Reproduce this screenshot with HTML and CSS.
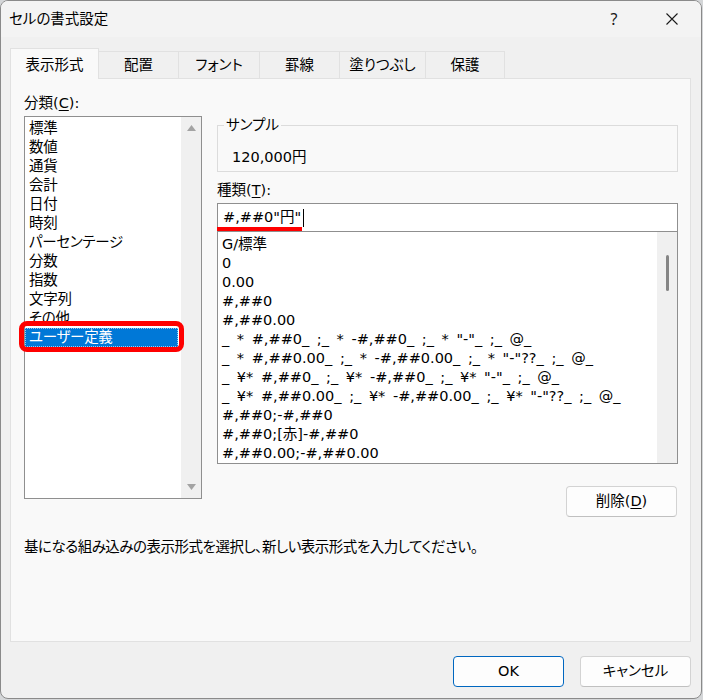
FILE: index.html
```html
<!DOCTYPE html>
<html lang="ja">
<head>
<meta charset="utf-8">
<title>セルの書式設定</title>
<link rel="stylesheet" href="styles.css">
</head>
<body>
<div class="dialog">
  <div class="titlebar">
    <span class="title">セルの書式設定</span>
    <span class="help">?</span>
    <span class="close"><svg width="12" height="12" viewBox="0 0 12 12"><path d="M0.5 0.5L11.5 11.5M11.5 0.5L0.5 11.5" stroke="#1a1a1a" stroke-width="1.1" fill="none"/></svg></span>
  </div>
  <div class="tabs">
    <div class="tab active">表示形式</div>
    <div class="tab">配置</div>
    <div class="tab">フォント</div>
    <div class="tab">罫線</div>
    <div class="tab">塗りつぶし</div>
    <div class="tab last">保護</div>
  </div>
  <div class="panel">
    <div class="columns">
      <div class="col-left">
        <div class="label cat-label">分類(<u>C</u>):</div>
        <div class="listbox cat">
          <div class="items">
            <div class="item">標準</div>
            <div class="item">数値</div>
            <div class="item">通貨</div>
            <div class="item">会計</div>
            <div class="item">日付</div>
            <div class="item">時刻</div>
            <div class="item">パーセンテージ</div>
            <div class="item">分数</div>
            <div class="item">指数</div>
            <div class="item">文字列</div>
            <div class="item">その他</div>
            <div class="item selected">ユーザー定義</div>
          </div>
          <div class="scrollbar arrows">
            <svg width="9" height="6" viewBox="0 0 9 6"><polygon points="4.5,0 9,6 0,6" fill="#a3a3a3"/></svg>
            <svg width="9" height="6" viewBox="0 0 9 6"><polygon points="0,0 9,0 4.5,6" fill="#a3a3a3"/></svg>
          </div>
          <div class="mark-box"></div>
        </div>
      </div>
      <div class="col-right">
        <fieldset class="sample">
          <legend>サンプル</legend>
          <div class="sample-value">120,000円</div>
        </fieldset>
        <div class="label type-label">種類(<u>T</u>):</div>
        <div class="input">#,##0"円"<span class="caret"></span><div class="mark-line"></div></div>
        <div class="listbox fmt">
          <div class="items">
            <div class="item">G/標準</div>
            <div class="item">0</div>
            <div class="item">0.00</div>
            <div class="item">#,##0</div>
            <div class="item">#,##0.00</div>
            <div class="item">_ * #,##0_ ;_ * -#,##0_ ;_ * "-"_ ;_ @_</div>
            <div class="item">_ * #,##0.00_ ;_ * -#,##0.00_ ;_ * "-"??_ ;_ @_</div>
            <div class="item">_ ¥* #,##0_ ;_ ¥* -#,##0_ ;_ ¥* "-"_ ;_ @_</div>
            <div class="item">_ ¥* #,##0.00_ ;_ ¥* -#,##0.00_ ;_ ¥* "-"??_ ;_ @_</div>
            <div class="item">#,##0;-#,##0</div>
            <div class="item">#,##0;[赤]-#,##0</div>
            <div class="item">#,##0.00;-#,##0.00</div>
          </div>
          <div class="scrollbar thumb-track"><div class="thumb"></div></div>
        </div>
        <div class="actions">
          <button class="btn">削除(<u>D</u>)</button>
        </div>
      </div>
    </div>
    <p class="desc">基になる組み込みの表示形式を選択し、新しい表示形式を入力してください。</p>
  </div>
  <div class="footer">
    <button class="btn ok">OK</button>
    <button class="btn">キャンセル</button>
  </div>
</div>
</body>
</html>
```

FILE: styles.css
```css
html, body {
  margin: 0;
  padding: 0;
}

body {
  background: #d4d6d8;
  font-family: "DejaVu Sans", "Noto Sans CJK JP", sans-serif;
  font-size: 14.5px;
  color: #000;
  font-feature-settings: "palt";
}

u {
  text-underline-offset: 2px;
}

.dialog {
  width: 702px;
  height: 699px;
  box-sizing: border-box;
  border: 1px solid #8a8a8a;
  border-radius: 8px;
  background: #f0f0f0;
  overflow: hidden;
  display: flex;
  flex-direction: column;
}

/* Title bar */
.titlebar {
  height: 36px;
  flex: none;
  background: #f3f3f3;
  display: flex;
  align-items: center;
  padding-left: 8px;
  line-height: 36px;
}

.title {
  flex: 1;
}

.help {
  width: 58px;
  text-align: center;
  color: #1a1a1a;
  font-family: "Noto Sans", sans-serif;
  font-size: 16px;
}

.close {
  width: 58px;
  height: 36px;
  display: flex;
  align-items: center;
  justify-content: center;
}

/* Tabs */
.tabs {
  display: grid;
  grid-template-columns: 89px 79px 81px 80px 86px 80px;
  align-items: end;
  height: 30px;
  margin: 11px 0 0 9px;
  flex: none;
}

.tab {
  box-sizing: border-box;
  height: 27px;
  border-top: 1px solid #e1e1e1;
  border-left: 1px solid #e1e1e1;
  background: #f0f0f0;
  text-align: center;
  line-height: 26px;
  white-space: nowrap;
}

.tab.last {
  border-right: 1px solid #e1e1e1;
}

.tab.active {
  height: 31px;
  margin-bottom: -1px;
  padding-top: 3px;
  border-right: 1px solid #e1e1e1;
  background: #f9f9f9;
  position: relative;
  z-index: 1;
}

.tab.active + .tab {
  border-left: none;
}

/* Panel */
.panel {
  margin-left: 9px;
  width: 681px;
  height: 564px;
  flex: none;
  box-sizing: border-box;
  border: 1px solid #e1e1e1;
  background: #f9f9f9;
  padding: 14px 12px 0 13px;
}

.columns {
  display: grid;
  grid-template-columns: 178px 461px;
  column-gap: 15px;
  align-items: start;
}

.label {
  line-height: 20px;
  height: 20px;
  white-space: nowrap;
}

.cat-label {
  margin-bottom: 3px;
}

.listbox {
  box-sizing: border-box;
  border: 1px solid #8f8f8f;
  background: #fff;
  display: flex;
  position: relative;
}

.items {
  flex: 1;
  min-width: 0;
}

.item {
  height: 19px;
  line-height: 19px;
  padding-left: 4px;
  white-space: nowrap;
}

.cat {
  height: 383px;
}

.cat .items {
  padding: 2px 3px 0 0;
  letter-spacing: -0.3px;
}

.item.selected {
  background: #0078d7;
  color: #fff;
  outline: 1px dotted rgba(255, 255, 255, 0.6);
  outline-offset: -1px;
}

.scrollbar {
  width: 20px;
  flex: none;
  background: #f0f0f0;
  box-sizing: border-box;
  display: flex;
  flex-direction: column;
  align-items: center;
}

.arrows {
  justify-content: space-between;
  padding: 8px 0;
}

.mark-box {
  position: absolute;
  left: -6px;
  top: 204px;
  width: 165px;
  height: 31px;
  box-sizing: border-box;
  border: 5px solid #ff0000;
  border-radius: 8px;
}

/* Right column */
.sample {
  margin: 22px 0 0 0;
  padding: 0;
  border: 1px solid #dcdcdc;
  min-width: 0;
}

.sample legend {
  padding: 0 2px;
  margin-left: 6px;
  line-height: 20px;
}

.sample-value {
  margin: 12px 0 4px 14px;
  line-height: 20px;
}

.type-label {
  margin-top: 8px;
}

.input {
  margin-top: 3px;
  height: 29px;
  box-sizing: border-box;
  border: 1px solid #8f8f8f;
  background: #fff;
  line-height: 27px;
  padding-left: 5px;
  position: relative;
  white-space: nowrap;
}

.caret {
  display: inline-block;
  width: 1px;
  height: 18px;
  background: #000;
  vertical-align: middle;
  margin-left: 2px;
}

.mark-line {
  position: absolute;
  left: -1px;
  top: 23px;
  width: 85px;
  height: 4px;
  background: #ff0000;
}

.fmt {
  margin-top: -1px;
  height: 233px;
  overflow: hidden;
}

.fmt .items {
  padding-top: 3px;
  word-spacing: 3px;
}

.thumb-track {
  padding-top: 23px;
}

.thumb {
  width: 3px;
  height: 36px;
  border-radius: 2px;
  background: #858585;
}

.actions {
  display: flex;
  justify-content: flex-end;
  margin-top: 22px;
  padding-right: 1px;
}

.btn {
  font: inherit;
  color: #000;
  width: 111px;
  height: 31px;
  padding: 0;
  box-sizing: border-box;
  border: 1px solid #d3d3d3;
  border-bottom-color: #c0c0c0;
  border-radius: 4px;
  background: #fdfdfd;
  line-height: 29px;
  white-space: nowrap;
}

.btn.ok {
  border-color: #0067c0;
}

.desc {
  margin: 20px 0 0 0;
  line-height: 20px;
  white-space: nowrap;
  letter-spacing: -0.5px;
}

/* Footer */
.footer {
  display: flex;
  justify-content: flex-end;
  gap: 16px;
  margin-top: 14px;
  padding-right: 10px;
  flex: none;
}
```
